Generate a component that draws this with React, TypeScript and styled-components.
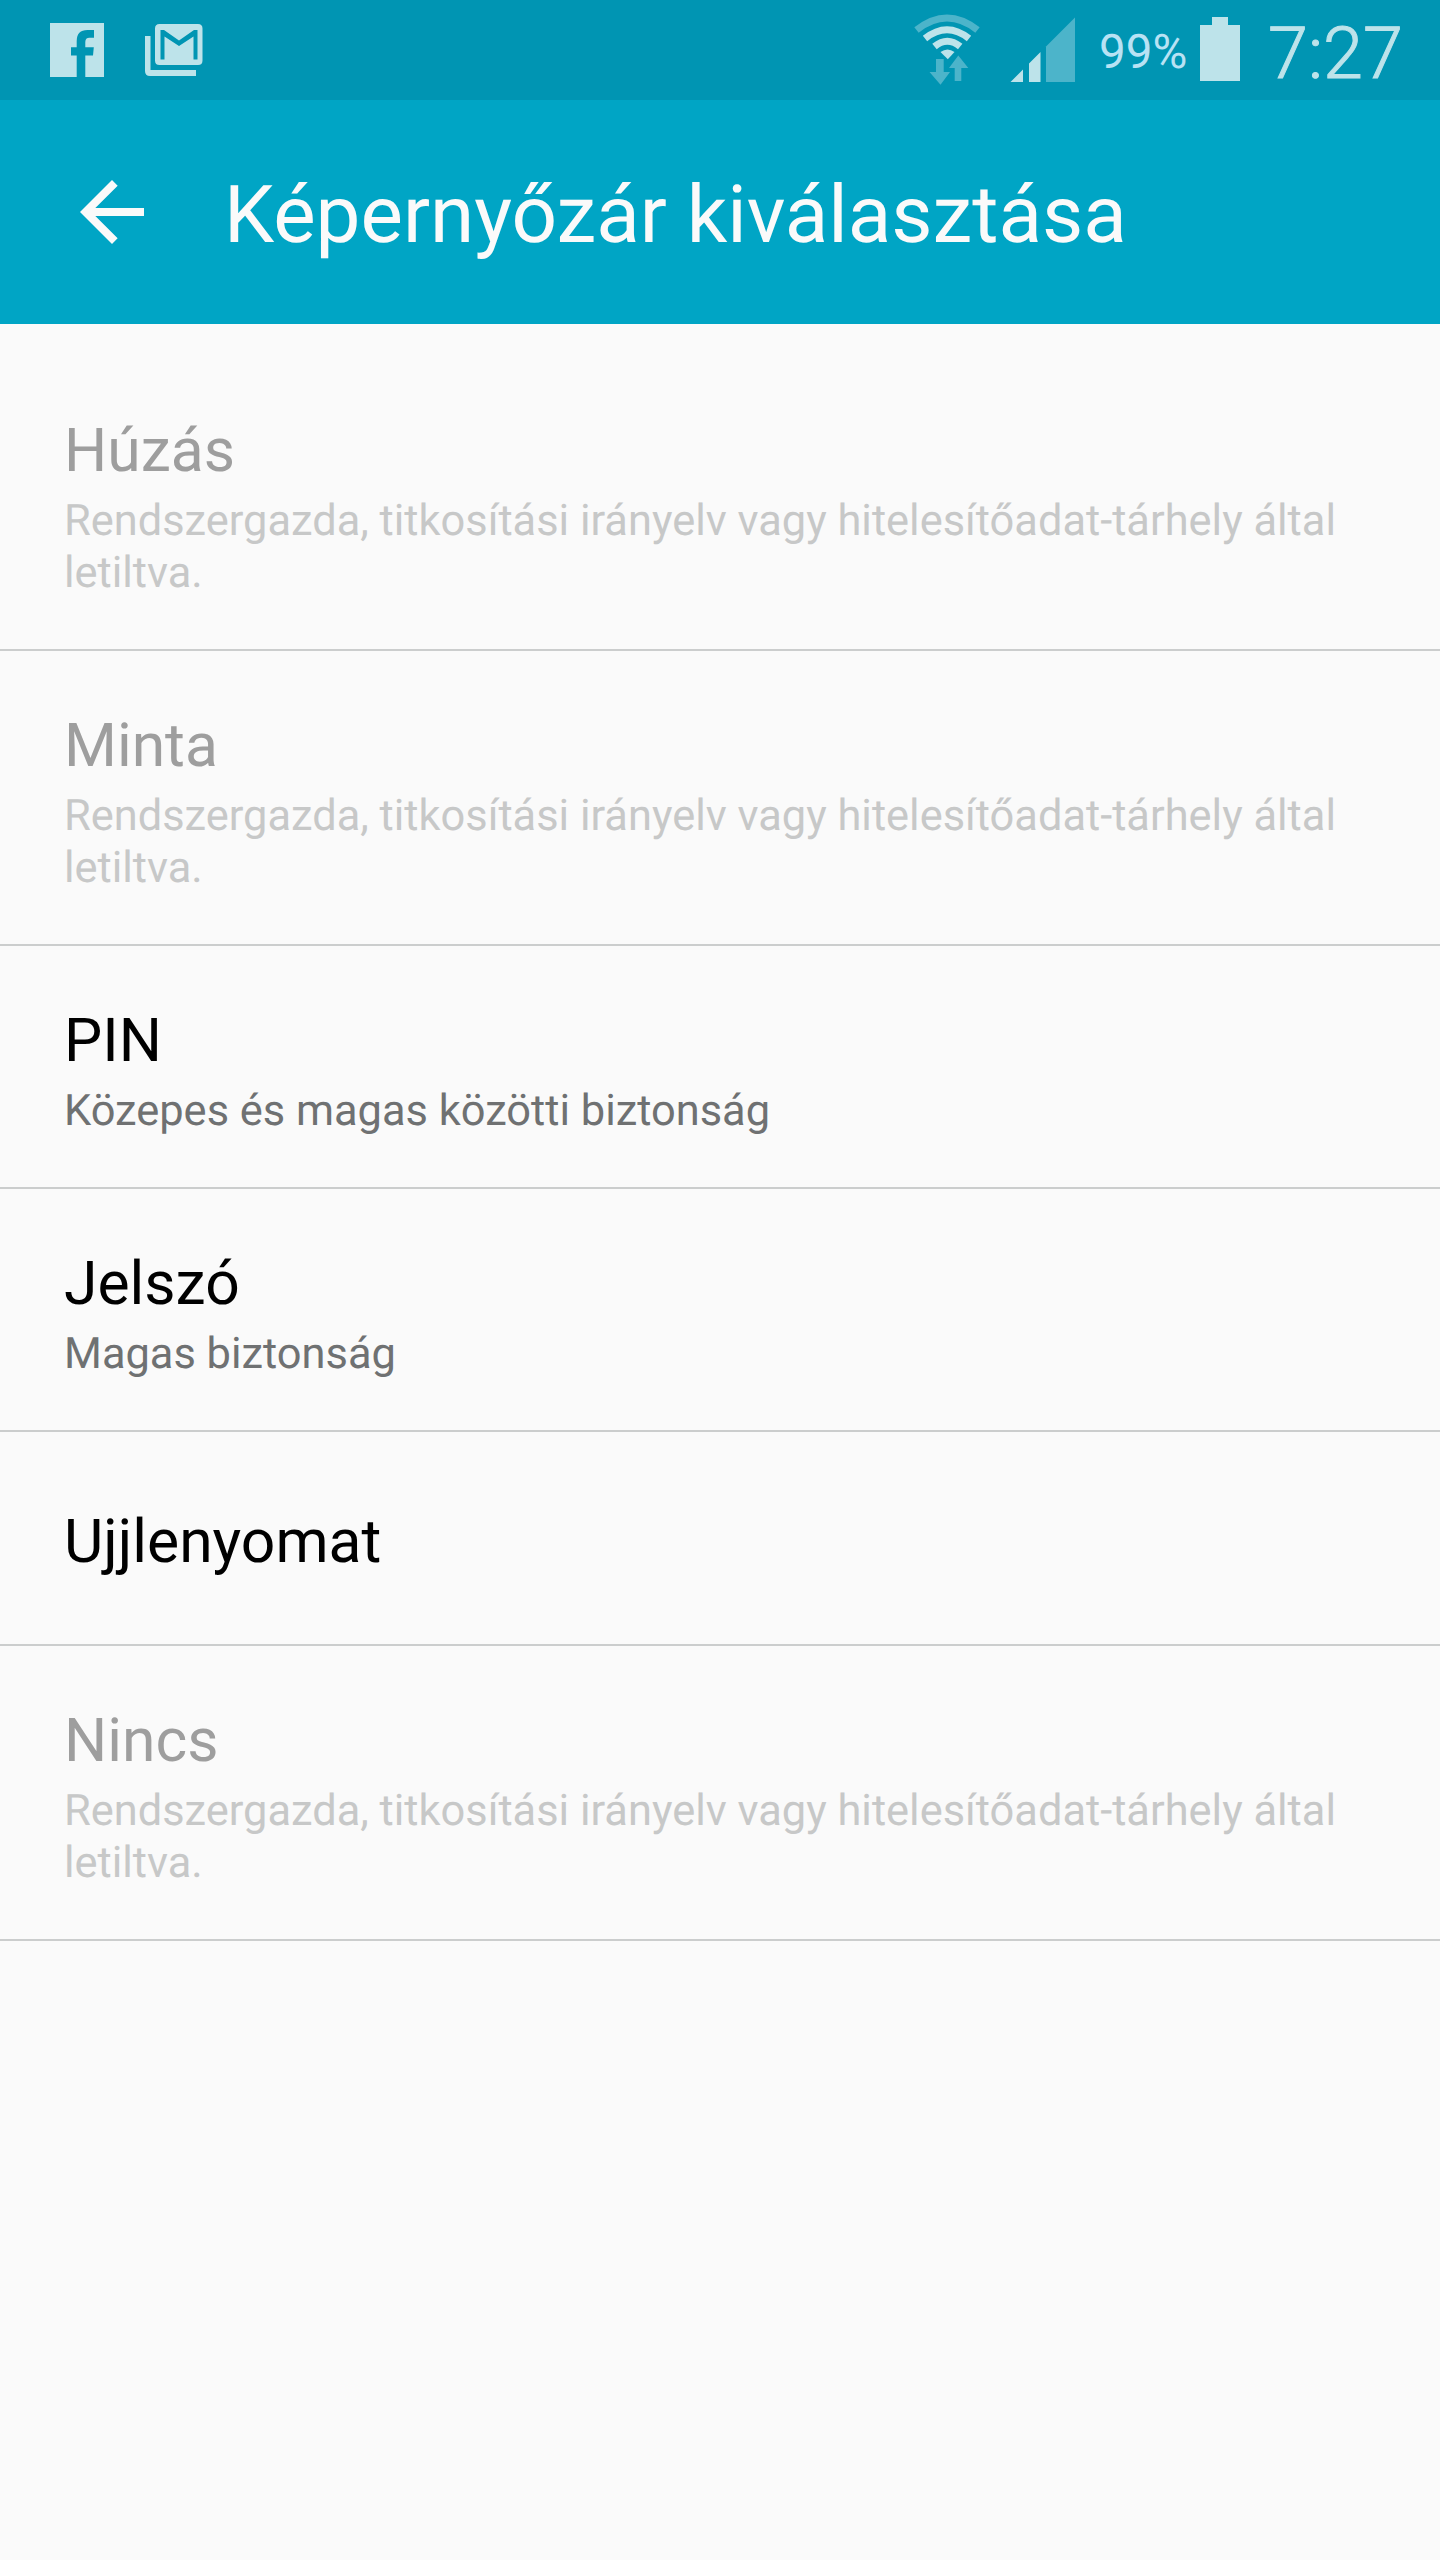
import React from 'react';
import styled, { createGlobalStyle } from 'styled-components';

const Global = createGlobalStyle`
  body { margin: 0; background: #fafafa; }
  * { box-sizing: border-box; }
`;

const Screen = styled.div`
  width: 1440px;
  height: 2560px;
  display: flex;
  flex-direction: column;
  overflow: hidden;
  background: #fafafa;
  font-family: Roboto, sans-serif;
  text-rendering: geometricPrecision;
`;

const StatusBar = styled.header`
  display: flex;
  justify-content: space-between;
  height: 100px;
  background: #0095b3;
  color: #bde3ea;
`;

const StatusGroup = styled.div`
  display: flex;
  align-items: flex-start;
`;

const Glyph = styled.svg`
  display: block;
  flex: none;
`;

const BatteryLevel = styled.span`
  width: 101px;
  margin-left: -1px;
  padding-top: 24px;
  font-size: 47.6px;
  line-height: 56px;
  color: #b8e2f4;
  white-space: nowrap;
`;

const Clock = styled.time`
  width: 172px;
  padding-top: 11px;
  font-size: 72px;
  line-height: 86px;
  font-weight: 300;
  -webkit-text-stroke: 1px currentColor;
  white-space: nowrap;
`;

const AppBar = styled.div`
  display: flex;
  height: 224px;
  background: #00a5c5;
  color: #fafafa;
`;

const BackButton = styled.button`
  display: flex;
  align-items: flex-start;
  width: 224px;
  height: 224px;
  padding: 80px 0 0 80px;
  border: 0;
  background: none;
  color: inherit;
`;

const Title = styled.h1`
  margin: 0;
  padding-top: 68px;
  font-size: 80px;
  line-height: 94px;
  font-weight: 400;
  white-space: nowrap;
`;

const Options = styled.ul`
  margin: 0;
  padding: 32px 0 0;
  list-style: none;
`;

const Option = styled.li<{ $height: number; $single: boolean; $disabled?: boolean }>`
  height: ${p => p.$height}px;
  padding: ${p => (p.$single ? 74 : 59)}px 64px 0;
  border-bottom: 2px solid #cbcdcd;
  color: ${p => (p.$disabled ? '#9e9e9e' : '#000')};
`;

const OptionName = styled.div`
  font-size: 60.6px;
  line-height: 72px;
`;

const OptionNote = styled.div<{ $disabled?: boolean }>`
  padding-top: 8px;
  font-size: 43.4px;
  line-height: 52px;
  color: ${p => (p.$disabled ? '#c7c8c8' : '#6f7172')};
`;

const locked = 'Rendszergazda, titkosítási irányelv vagy hitelesítőadat-tárhely által letiltva.';

const options = [
  { name: 'Húzás', note: locked, disabled: true, height: 295 },
  { name: 'Minta', note: locked, disabled: true, height: 295 },
  { name: 'PIN', note: 'Közepes és magas közötti biztonság', height: 243 },
  { name: 'Jelszó', note: 'Magas biztonság', height: 243 },
  { name: 'Ujjlenyomat', height: 214 },
  { name: 'Nincs', note: locked, disabled: true, height: 295 },
];

export default function App() {
  return (
    <Screen>
      <Global />
      <StatusBar>
        <StatusGroup>
          <Glyph width="220" height="100" viewBox="0 0 220 100" fill="#bde3ea">
            <path d="M50 23h54v54H85.300V55.500h7.700l.8-8.200H85.300V42q0-4.300 4.200-4.300h4.500V30h-6.500q-10.800 0-10.800 11v6.300H71v8.200h5.700V77H50z" />
            <path d="M145 36h5.500v34h45.500v6h-46q-5 0-5-5z" />
            <path fillRule="evenodd" d="M159.500 24h38.500q4.500 0 4.500 4.500v32q0 4.500-4.500 4.500h-38.500q-4.500 0-4.500-4.500v-32q0-4.500 4.500-4.500zM160.500 59.500h4V36.500l14.500 9.500L193.500 36.500v23h4V30H194l-15 10.500-15-10.500h-3.500z" />
          </Glyph>
        </StatusGroup>
        <StatusGroup>
          <Glyph width="200" height="100" viewBox="900 0 200 100" fill="#bde3ea">
            <g fill="none" strokeWidth="7">
              <path d="M916.500 30Q947 6 977.500 30" stroke="#4cb4ca" />
              <path d="M925 38.500Q947 21 969 38.500" stroke="#bde3ea" />
              <path d="M934.500 46.500Q947.300 36 960.200 46.500" stroke="#bde3ea" />
            </g>
            <path d="M940.500 52q7-5 14 0l-6.700 7.300z" />
            <path fill="#4cb4ca" d="M936 59h7.700v13h6.300l-9.500 12.700L929.500 72h6.500zM954.700 81V68H949l9.300-12.500L968.300 68h-7v13z" />
            <path d="M1010.500 82L1023 69.500V82zM1029 82V63.500L1040.500 52v30z" />
            <path fill="#4cb4ca" d="M1046 82V46.500L1075 17.500V82z" />
          </Glyph>
          <BatteryLevel>99%</BatteryLevel>
          <Glyph width="68" height="100" viewBox="1200 0 68 100" fill="#bde3ea">
            <path d="M1200 25h12v-8h16v8h12v56h-40z" />
          </Glyph>
          <Clock>7:27</Clock>
        </StatusGroup>
      </StatusBar>
      <AppBar>
        <BackButton aria-label="Vissza">
          <Glyph width="64" height="64" viewBox="4 4 16 16" fill="currentColor">
            <path d="M20 11H7.830l5.590-5.590L12 4l-8 8 8 8 1.410-1.410L7.830 13H20z" />
          </Glyph>
        </BackButton>
        <Title>Képernyőzár kiválasztása</Title>
      </AppBar>
      <Options>
        {options.map(o => (
          <Option key={o.name} $height={o.height} $single={!o.note} $disabled={o.disabled}>
            <OptionName>{o.name}</OptionName>
            {o.note && <OptionNote $disabled={o.disabled}>{o.note}</OptionNote>}
          </Option>
        ))}
      </Options>
    </Screen>
  );
}
